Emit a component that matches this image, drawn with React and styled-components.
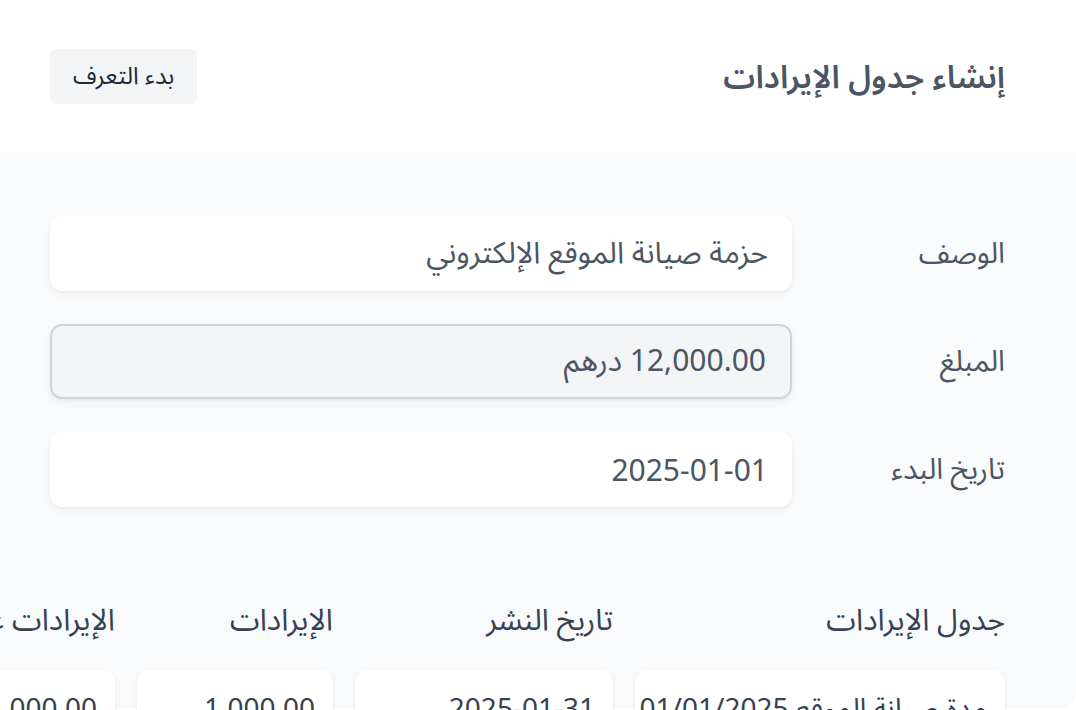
import React from "react";
import styled, { createGlobalStyle } from "styled-components";

const Global = createGlobalStyle`
  html, body {
    margin: 0;
    padding: 0;
    background: #ffffff;
  }
  body {
    font-family: "Noto Sans", "Noto Sans Arabic", "DejaVu Sans", sans-serif;
    direction: rtl;
    overflow: hidden;
  }
  * { box-sizing: border-box; }
`;

const Page = styled.div`
  width: 1076px;
  height: 710px;
  overflow: hidden;
  direction: rtl;
`;

const Header = styled.header`
  height: 152px;
  display: flex;
  align-items: center;
  justify-content: space-between;
  padding: 0 71px 0 50px;
`;

const Title = styled.h1`
  margin: 0;
  font-size: 32px;
  font-weight: 600;
  color: #4b5563;
  line-height: 1.2;
`;

const GhostButton = styled.button`
  height: 55px;
  padding: 0 23px;
  border: none;
  border-radius: 6px;
  background: #f3f4f6;
  color: #1f2937;
  font-family: inherit;
  font-size: 24px;
  cursor: pointer;
`;

const Panel = styled.main`
  background: #f9fafb;
  height: 556px;
  padding: 64px 71px 0 50px;
  border-bottom-right-radius: 16px;
  overflow-x: clip;
`;

const Form = styled.div`
  display: flex;
  flex-direction: column;
  gap: 33px;
`;

const Row = styled.div`
  display: grid;
  grid-template-columns: 213px 1fr;
  align-items: center;
`;

const Label = styled.label`
  font-size: 29px;
  color: #4b5563;
`;

const Field = styled.div`
  height: 75px;
  display: flex;
  align-items: center;
  padding: 0 24px;
  border-radius: 12px;
  font-size: 30px;
  color: #4b5563;
  background: ${(p) => (p.$readOnly ? "#f3f4f6" : "#ffffff")};
  border: ${(p) => (p.$readOnly ? "2px solid #d1d5db" : "none")};
  box-shadow: 0 1px 3px rgba(0, 0, 0, 0.05), 0 4px 10px rgba(0, 0, 0, 0.04);
`;

const Table = styled.div`
  margin-top: 83px;
  display: grid;
  grid-template-columns: 370px 258px 196px 320px 200px;
  column-gap: 22px;
  row-gap: 20px;
  width: max-content;
`;

const HeadCell = styled.div`
  height: 60px;
  display: flex;
  align-items: center;
  font-size: 30px;
  color: #374151;
  white-space: nowrap;
`;

const Cell = styled.div`
  height: 90px;
  padding: 18px 18px;
  border-radius: 12px;
  background: #ffffff;
  font-size: 28px;
  color: #374151;
  line-height: 1.4;
  box-shadow: 0 1px 3px rgba(0, 0, 0, 0.05), 0 4px 10px rgba(0, 0, 0, 0.04);
  overflow: hidden;
  white-space: nowrap;
`;

const fields = [
  { label: "الوصف", value: "حزمة صيانة الموقع الإلكتروني" },
  { label: "المبلغ", value: "12,000.00 درهم", readOnly: true },
  { label: "تاريخ البدء", value: "2025-01-01" },
];

const heads = [
  "جدول الإيرادات",
  "تاريخ النشر",
  "الإيرادات",
  "الإيرادات غير المحققة",
  "الحالة",
];

const cells = [
  "مدة صيانة الموقع 01/01/2025",
  "2025-01-31",
  "1,000.00",
  "11,000.00",
  "مجدول",
];

export default function App() {
  return (
    <Page>
      <Global />
      <Header>
        <Title>إنشاء جدول الإيرادات</Title>
        <GhostButton>بدء التعرف</GhostButton>
      </Header>
      <Panel>
        <Form>
          {fields.map((f) => (
            <Row key={f.label}>
              <Label>{f.label}</Label>
              <Field $readOnly={f.readOnly}>{f.value}</Field>
            </Row>
          ))}
        </Form>
        <Table>
          {heads.map((h) => (
            <HeadCell key={h}>{h}</HeadCell>
          ))}
          {cells.map((c) => (
            <Cell key={c}>{c}</Cell>
          ))}
        </Table>
      </Panel>
    </Page>
  );
}
